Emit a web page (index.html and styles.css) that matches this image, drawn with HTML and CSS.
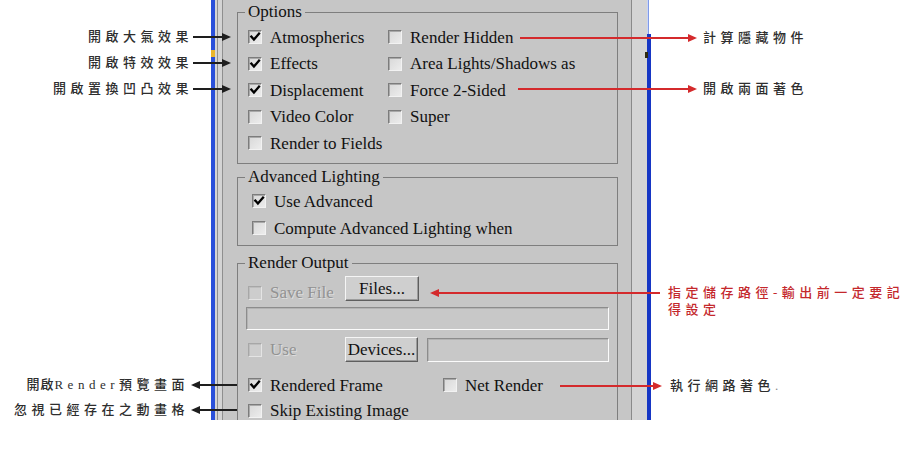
FILE: index.html
```html
<!DOCTYPE html>
<html lang="zh-Hant">
<head>
<meta charset="utf-8">
<title>Render Options</title>
<link rel="stylesheet" href="styles.css">
</head>
<body>
<div class="figure">
  <div class="panel">
    <div class="frame">
      <div class="inner">
        <fieldset class="group g-options">
          <legend>Options</legend>
          <div class="opt-grid">
            <label class="cb"><span class="box"><svg viewBox="0 0 12 12" width="12" height="12"><path d="M2.3 5.6 L4.9 8.6 L10 2.6" /></svg></span>Atmospherics</label>
            <label class="cb"><span class="box"></span>Render Hidden</label>
            <label class="cb"><span class="box"><svg viewBox="0 0 12 12" width="12" height="12"><path d="M2.3 5.6 L4.9 8.6 L10 2.6" /></svg></span>Effects</label>
            <label class="cb"><span class="box"></span>Area Lights/Shadows as</label>
            <label class="cb"><span class="box"><svg viewBox="0 0 12 12" width="12" height="12"><path d="M2.3 5.6 L4.9 8.6 L10 2.6" /></svg></span>Displacement</label>
            <label class="cb"><span class="box"></span>Force 2-Sided</label>
            <label class="cb"><span class="box"></span>Video Color</label>
            <label class="cb"><span class="box"></span>Super</label>
            <label class="cb"><span class="box"></span>Render to Fields</label>
          </div>
        </fieldset>

        <fieldset class="group g-adv">
          <legend>Advanced Lighting</legend>
          <div class="adv-list">
            <label class="cb"><span class="box"><svg viewBox="0 0 12 12" width="12" height="12"><path d="M2.3 5.6 L4.9 8.6 L10 2.6" /></svg></span>Use Advanced</label>
            <label class="cb"><span class="box"></span>Compute Advanced Lighting when</label>
          </div>
        </fieldset>

        <fieldset class="group g-out">
          <legend>Render Output</legend>
          <div class="out-row save-row">
            <label class="cb off"><span class="box"></span>Save File</label>
            <button class="btn files" type="button">Files...</button>
          </div>
          <div class="field wide"></div>
          <div class="out-row dev-row">
            <label class="cb off"><span class="box"></span>Use</label>
            <button class="btn dev" type="button">Devices...</button>
            <div class="field dev-field"></div>
          </div>
          <div class="frame-grid">
            <label class="cb"><span class="box"><svg viewBox="0 0 12 12" width="12" height="12"><path d="M2.3 5.6 L4.9 8.6 L10 2.6" /></svg></span>Rendered Frame</label>
            <label class="cb"><span class="box"></span>Net Render</label>
            <label class="cb"><span class="box"></span>Skip Existing Image</label>
          </div>
        </fieldset>
      </div>
    </div>
  </div>

  <div class="edge-top"></div>
  <div class="mark mark-l"></div>
  <div class="mark mark-r"></div>

  <div class="callout dark c-l1"><span class="note">開啟大氣效果</span><span class="arrow to-right w36"></span></div>
  <div class="callout dark c-l2"><span class="note">開啟特效效果</span><span class="arrow to-right w36"></span></div>
  <div class="callout dark c-l3"><span class="note">開啟置換凹凸效果</span><span class="arrow to-right w36"></span></div>
  <div class="callout dark c-l4"><span class="note"><span class="tight">開啟</span>Render預覽畫面</span><span class="arrow to-left w44"></span></div>
  <div class="callout dark c-l5"><span class="note">忽視已經存在之動畫格</span><span class="arrow to-left w44"></span></div>

  <div class="callout red c-r1"><span class="arrow to-right w175"></span><span class="note">計算隱藏物件</span></div>
  <div class="callout red c-r2"><span class="arrow to-right w177"></span><span class="note">開啟兩面著色</span></div>
  <div class="callout red c-r3"><span class="arrow to-left w228"></span><span class="note red-text">指定儲存路徑-輸出前一定要記<br>得設定</span></div>
  <div class="callout red c-r4"><span class="arrow to-right w100"></span><span class="note">執行網路著色<span class="dot">.</span></span></div>
</div>
</body>
</html>
```

FILE: styles.css
```css
html, body {
  margin: 0;
  padding: 0;
  background: #ffffff;
}

.figure {
  position: relative;
  width: 918px;
  height: 455px;
  overflow: hidden;
  font-family: "Liberation Serif", "Times New Roman", serif;
  color: #111;
}

/* ---------- dialog panel ---------- */
.panel {
  margin-left: 211px;
  width: 440px;
  height: 420px;
  box-sizing: border-box;
  border-left: 4px solid #2a50da;
  border-right: 4px solid #1636c4;
  background: #d4d4d4;
  overflow: hidden;
  display: flex;
}

.frame {
  margin-left: 2px;
  border-left: 1px solid #8f8f8f;
  display: flex;
  flex: 1;
}

.inner {
  margin-left: 4px;
  width: 410px;
  box-sizing: border-box;
  border-left: 1px solid #8f8f8f;
  border-right: 1px solid #8a8a8a;
  background: #c6c6c6;
  flex: none;
}

/* ---------- group boxes ---------- */
.group {
  box-sizing: border-box;
  width: 381px;
  margin: 0 0 0 14px;
  min-width: 0;
  border: 1px solid #7e7e7e;
  padding: 3px 0 6px 7px;
}

.group legend {
  font-size: 17px;
  line-height: 18px;
  padding: 0 3px;
  color: #111;
}

.g-options { margin-top: 3px; }
.g-adv { margin-top: 4.5px; padding-top: 1.5px; padding-bottom: 3px; }
.g-out { margin-top: 8.5px; padding-top: 0; }

/* ---------- checkboxes ---------- */
.cb {
  display: flex;
  align-items: center;
  gap: 8px;
  font-size: 17px;
  line-height: 17px;
  white-space: nowrap;
  color: #111;
}

.box {
  width: 14px;
  height: 14px;
  box-sizing: border-box;
  flex: none;
  border: 1px solid;
  border-color: #7c7c7c #f2f2f2 #f2f2f2 #7c7c7c;
  box-shadow: inset 1px 1px 0 #a9a9a9;
  background: linear-gradient(135deg, #d8d8d8, #ececec);
  display: flex;
  align-items: center;
  justify-content: center;
}

.box svg path {
  fill: none;
  stroke: #000;
  stroke-width: 2.3;
  stroke-linecap: square;
  stroke-linejoin: miter;
}

.cb.off { color: #929292; text-shadow: 1px 1px 0 #dedede; }
.cb.off .box {
  border-color: #a7a7a7 #e4e4e4 #e4e4e4 #a7a7a7;
  box-shadow: inset 1px 1px 0 #bdbdbd;
  background: #cdcdcd;
}

/* Options grid */
.opt-grid {
  display: grid;
  grid-template-columns: 140px 1fr;
  grid-auto-rows: 26.5px;
  padding-left: 3px;
}

/* Advanced lighting */
.adv-list {
  display: grid;
  grid-auto-rows: 27px;
  padding-left: 7px;
}

/* ---------- render output ---------- */
.out-row {
  display: flex;
}

.save-row {
  margin-top: 4px;
  height: 25px;
  align-items: flex-end;
  padding-left: 3px;
}

.save-row .cb { width: 97px; }

.dev-row {
  margin-top: 7px;
  height: 25px;
  align-items: center;
  padding-left: 3px;
}

.dev-row .cb { width: 97px; }

.btn {
  box-sizing: border-box;
  height: 25px;
  padding: 0;
  margin: 0;
  font-family: "Liberation Serif", "Times New Roman", serif;
  font-size: 17px;
  color: #111;
  background: #cfcfcf;
  border: 1px solid;
  border-color: #f5f5f5 #5e5e5e #5e5e5e #f5f5f5;
  box-shadow: inset -1px -1px 0 #9c9c9c;
  flex: none;
}

.btn.files { width: 74px; }
.btn.dev { width: 73px; }

.field {
  box-sizing: border-box;
  border: 1px solid;
  border-color: #8c8c8c #fbfbfb #fbfbfb #8c8c8c;
  box-shadow: inset 1px 1px 0 #b3b3b3;
  background: #c8c8c8;
}

.field.wide {
  margin: 6px 0 0 1px;
  width: 363px;
  height: 23px;
}

.field.dev-field {
  margin-left: 9px;
  width: 182px;
  height: 24px;
}

.frame-grid {
  margin-top: 10px;
  display: grid;
  grid-template-columns: 195px 1fr;
  grid-template-rows: 26px 25px;
  padding-left: 3px;
}

/* ---------- border decorations ---------- */
.edge-top {
  position: absolute;
  left: 647px;
  top: 0;
  width: 4px;
  height: 34px;
  background: linear-gradient(90deg, #c9d4f5 0 1px, #7f9ae8 1px 2px, #ffffff 2px);
}

.mark {
  position: absolute;
}

.mark-l {
  left: 211px;
  top: 50px;
  width: 4px;
  height: 7px;
  background: #eab52c;
}

.mark-r {
  left: 645px;
  top: 52px;
  width: 3px;
  height: 6px;
  background: #2e2a10;
}

/* ---------- callouts ---------- */
.callout {
  position: absolute;
  display: flex;
  align-items: center;
  height: 16px;
}

.callout.dark { color: #1e1e1e; }
.callout.red { color: #d42a2c; }

.note {
  font-family: "Liberation Serif", "Noto Sans CJK TC", serif;
  font-size: 13px;
  font-weight: 500;
  line-height: 16px;
  letter-spacing: 4.5px;
  color: #2e2e2e;
  white-space: nowrap;
}

.note .tight { letter-spacing: 1px; }

.note.red-text {
  color: #c4282c;
  line-height: 17px;
}

.dot { color: #8a8a8a; }

.arrow {
  position: relative;
  height: 2px;
  background: currentColor;
  flex: none;
}

.arrow.to-right::after,
.arrow.to-left::before {
  content: "";
  position: absolute;
  top: -3px;
  border-top: 4px solid transparent;
  border-bottom: 4px solid transparent;
}

.arrow.to-right::after {
  right: -2px;
  border-left: 9px solid currentColor;
}

.arrow.to-left::before {
  left: -2px;
  border-right: 9px solid currentColor;
}

.w36 { width: 36px; }
.w44 { width: 44px; }
.w100 { width: 100px; }
.w175 { width: 175px; }
.w177 { width: 177px; }
.w228 { width: 228px; }

.c-l1 { right: 689px; top: 29px; }
.c-l2 { right: 689px; top: 55px; }
.c-l3 { right: 689px; top: 81px; }
.c-l4 { right: 681px; top: 377px; }
.c-l5 { right: 681px; top: 402px; }
.c-l4 .arrow, .c-l5 .arrow { margin-left: 4px; }

.c-r1 { left: 520px; top: 30px; }
.c-r2 { left: 518px; top: 81px; }
.c-r1 .note, .c-r2 .note { margin-left: 8px; }

.c-r3 {
  left: 432px;
  top: 284px;
  height: auto;
  align-items: flex-start;
}
.c-r3 .arrow { margin-top: 7.5px; }
.c-r3 .note { margin-left: 8px; }

.c-r4 { left: 560px; top: 378px; }
.c-r4 .note { margin-left: 10px; }
```
